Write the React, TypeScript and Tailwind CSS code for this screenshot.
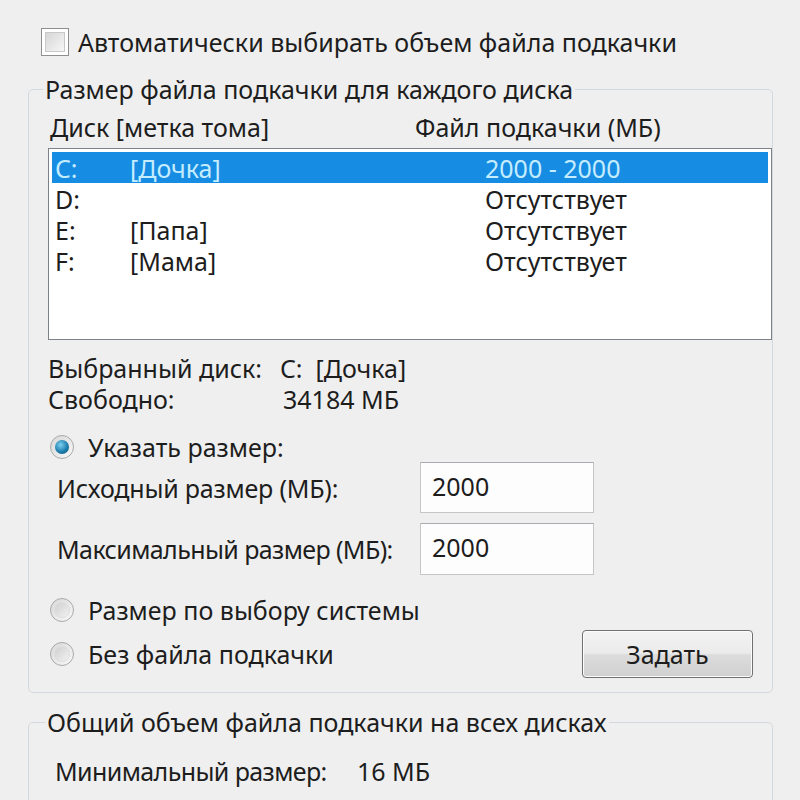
import React from 'react';

const drives = [
  { letter: 'C:', label: '[Дочка]', size: '2000 - 2000', selected: true },
  { letter: 'D:', label: '', size: 'Отсутствует', selected: false },
  { letter: 'E:', label: '[Папа]', size: 'Отсутствует', selected: false },
  { letter: 'F:', label: '[Мама]', size: 'Отсутствует', selected: false },
];

function Radio({ checked }: { checked?: boolean }) {
  return (
    <div className="w-[24px] h-[24px] rounded-full border border-[#a9a9a9] bg-gradient-to-br from-[#d8d8d8] to-[#f8f8f8] flex items-center justify-center shrink-0">
      {checked ? (
        <div className="w-[14px] h-[14px] rounded-full bg-[radial-gradient(circle_at_40%_35%,#7fd0f0,#1d7fae_55%,#0b4a6e)]" />
      ) : (
        <div className="w-[16px] h-[16px] rounded-full bg-gradient-to-br from-[#cfcfcf] to-[#f2f2f2] border border-[#dedede]" />
      )}
    </div>
  );
}

export default function App() {
  return (
    <div className="w-[800px] h-[800px] overflow-hidden bg-[#efefef] text-[#1d1d1d] text-[25px] leading-[28px] whitespace-nowrap font-['Noto_Sans',sans-serif]">
      {/* Auto checkbox */}
      <div className="flex items-center pt-[28px] pl-[41px]">
        <div className="w-[28px] h-[28px] border border-[#8f8f8f] bg-white p-[3px] shrink-0">
          <div className="w-full h-full border border-[#c9c9c9] bg-gradient-to-br from-[#d6d6d6] to-[#f7f7f7]" />
        </div>
        <span className="ml-[9px]">Автоматически выбирать объем файла подкачки</span>
      </div>

      {/* Per-drive group */}
      <fieldset className="mt-[19px] ml-[28px] w-[745px] border border-[#d3d9de] rounded-[5px] pl-[19px] pb-[14px]">
        <legend className="-ml-[5px] px-[2px]">Размер файла подкачки для каждого диска</legend>

        <div className="flex mt-[10px] ml-[2px]">
          <span className="w-[365px]">Диск [метка тома]</span>
          <span>Файл подкачки (МБ)</span>
        </div>

        <div className="mt-[7px] h-[192px] border border-[#7d8289] bg-white p-[3px]">
          {drives.map((d) => (
            <div
              key={d.letter}
              className={`flex items-center h-[31px] px-[3px] ${d.selected ? 'bg-[#168ce3] text-[#c4ecff]' : ''}`}
            >
              <span className="w-[75px]">{d.letter}</span>
              <span className="w-[355px]">{d.label}</span>
              <span>{d.size}</span>
            </div>
          ))}
        </div>

        <div className="flex items-center h-[31px] mt-[12px]">
          <span className="w-[232px]">Выбранный диск:</span>
          <span>C:&nbsp;&nbsp;[Дочка]</span>
        </div>
        <div className="flex items-center h-[31px]">
          <span className="w-[235px]">Свободно:</span>
          <span>34184 МБ</span>
        </div>

        <div className="flex items-center h-[30px] mt-[18px] ml-[2px]">
          <Radio checked />
          <span className="ml-[14px]">Указать размер:</span>
        </div>

        <div className="flex items-center h-[51px] ml-[9px]">
          <span className="w-[363px] tracking-[-0.2px]">Исходный размер (МБ):</span>
          <div className="w-[174px] h-[51px] border border-[#c4c6ca] border-t-[#a9abb0] bg-[#fdfdfd] pl-[11px] pt-[9px]">2000</div>
        </div>
        <div className="flex items-center h-[52px] mt-[10px] ml-[9px]">
          <span className="w-[363px] tracking-[-0.6px]">Максимальный размер (МБ):</span>
          <div className="w-[174px] h-[52px] border border-[#c4c6ca] border-t-[#a9abb0] bg-[#fdfdfd] pl-[11px] pt-[9px]">2000</div>
        </div>

        <div className="flex items-center h-[28px] mt-[21px] ml-[2px]">
          <Radio />
          <span className="ml-[14px]">Размер по выбору системы</span>
        </div>

        <div className="flex items-center justify-between h-[48px] mt-[6px] ml-[2px] mr-[19px]">
          <div className="flex items-center">
            <Radio />
            <span className="ml-[14px]">Без файла подкачки</span>
          </div>
          <button className="w-[171px] h-[48px] rounded-[4px] border border-[#707070] bg-[linear-gradient(#f3f3f3,#ebebeb_48%,#dcdcdc_52%,#d0d0d0)] shadow-[inset_0_0_0_1px_#fcfcfc] text-[#1d1d1d]">
            Задать
          </button>
        </div>
      </fieldset>

      {/* Total group */}
      <fieldset className="mt-[15px] ml-[28px] w-[745px] h-[200px] border border-[#d3d9de] rounded-[5px] pl-[16px]">
        <legend className="px-[2px]">Общий объем файла подкачки на всех дисках</legend>
        <div className="flex items-center h-[28px] mt-[21px] ml-[10px]">
          <span className="w-[302px] tracking-[-0.6px]">Минимальный размер:</span>
          <span>16 МБ</span>
        </div>
      </fieldset>
    </div>
  );
}
